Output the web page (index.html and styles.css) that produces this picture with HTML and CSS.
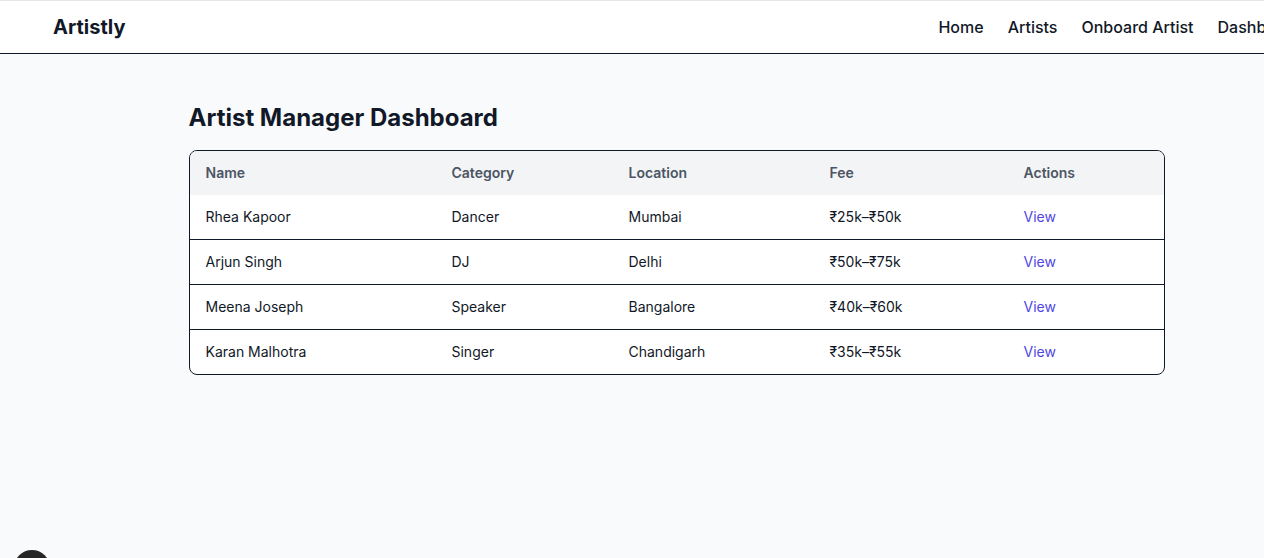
FILE: index.html
```html
<!DOCTYPE html>
<html lang="en">
<head>
<meta charset="utf-8">
<title>Artistly</title>
<link rel="stylesheet" href="styles.css">
</head>
<body>
<div class="page">
  <header class="topbar">
    <div class="brand">Artistly</div>
    <nav class="nav">
      <a href="#">Home</a>
      <a href="#">Artists</a>
      <a href="#">Onboard Artist</a>
      <a href="#">Dashboard</a>
    </nav>
  </header>
  <main class="main">
    <h1 class="title">Artist Manager Dashboard</h1>
    <div class="card">
      <table class="table">
        <colgroup>
          <col class="c-name"><col class="c-cat"><col class="c-loc"><col class="c-fee"><col class="c-act">
        </colgroup>
        <thead>
          <tr><th>Name</th><th>Category</th><th>Location</th><th>Fee</th><th>Actions</th></tr>
        </thead>
        <tbody>
          <tr><td>Rhea Kapoor</td><td>Dancer</td><td>Mumbai</td><td>₹25k–₹50k</td><td><a class="view" href="#">View</a></td></tr>
          <tr><td>Arjun Singh</td><td>DJ</td><td>Delhi</td><td>₹50k–₹75k</td><td><a class="view" href="#">View</a></td></tr>
          <tr><td>Meena Joseph</td><td>Speaker</td><td>Bangalore</td><td>₹40k–₹60k</td><td><a class="view" href="#">View</a></td></tr>
          <tr><td>Karan Malhotra</td><td>Singer</td><td>Chandigarh</td><td>₹35k–₹55k</td><td><a class="view" href="#">View</a></td></tr>
        </tbody>
      </table>
    </div>
  </main>
</div>
<div class="dev-dot"></div>
</body>
</html>
```
FILE: styles.css
```css
html, body {
  margin: 0;
  padding: 0;
}
body {
  font-family: Inter, "Noto Sans", "Liberation Sans", sans-serif;
  color: #111827;
  background: #f9fafb;
  overflow: hidden;
  border-top: 1px solid #e5e7eb;
}
.page {
  width: 1353px;
  min-height: 557px;
}
.topbar {
  display: flex;
  align-items: center;
  justify-content: space-between;
  background: #ffffff;
  border-bottom: 1px solid #111827;
  padding: 12px 52px 12px 53px;
}
.brand {
  font-size: 20px;
  line-height: 28px;
  font-weight: 700;
  color: #111827;
}
.nav {
  display: flex;
  gap: 24px;
}
.nav a {
  font-size: 16px;
  line-height: 24px;
  font-weight: 500;
  color: #111827;
  text-decoration: none;
}
.main {
  max-width: 976px;
  margin: 0 auto;
  padding: 48px 24px 24px;
}
.title {
  margin: 0 0 16px;
  font-size: 24px;
  line-height: 32px;
  font-weight: 700;
  color: #111827;
}
.card {
  border: 1px solid #111827;
  border-radius: 8px;
  overflow: hidden;
  background: #ffffff;
}
.table {
  width: 100%;
  border-collapse: collapse;
  table-layout: fixed;
  font-size: 14px;
  line-height: 20px;
}
.c-name { width: 246px; }
.c-cat { width: 177px; }
.c-loc { width: 201px; }
.c-fee { width: 194px; }
.c-act { width: auto; }
.table th {
  background: #f3f4f6;
  text-align: left;
  font-weight: 600;
  color: #4b5563;
  padding: 12px 16px;
}
.table td {
  padding: 12px 16px;
  color: #111827;
}
.table tbody tr {
  border-bottom: 1px solid #111827;
}
.table tbody tr:last-child {
  border-bottom: none;
}
.view {
  color: #4f46e5;
  text-decoration: none;
}
.dev-dot {
  position: fixed;
  left: 14px;
  top: 550px;
  width: 36px;
  height: 36px;
  border-radius: 50%;
  background: #262626;
}
```
